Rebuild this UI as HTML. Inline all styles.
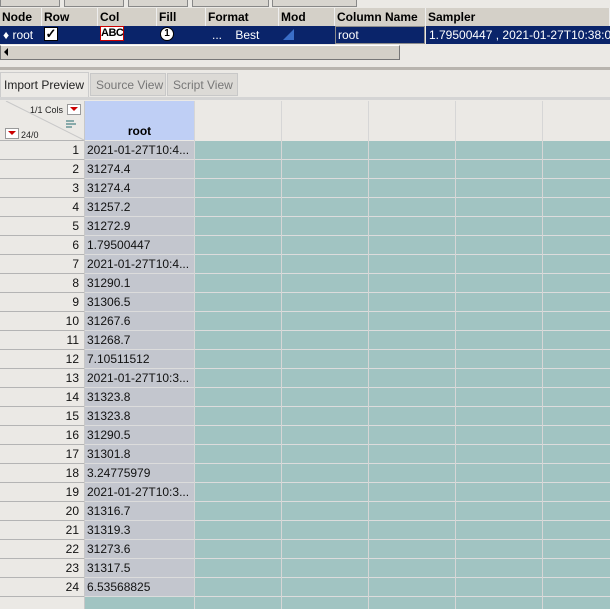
<!DOCTYPE html>
<html><head><style>
html,body{margin:0;width:610px;height:609px;overflow:hidden}
body{background:#ebe9e5;font-family:"Liberation Sans",sans-serif;font-size:12px;position:relative}
.a{position:absolute}
.btn{position:absolute;top:-2px;height:8px;background:#d8d5cf;border:1px solid #888;border-top:none}
.hd{top:8px;height:18px;background:#d4d0c8;line-height:18px;font-weight:bold;font-size:12px;padding-left:2px;box-sizing:border-box;border-right:1px solid #eee}
.sel{top:26px;height:18px;background:#0a246a;color:#fff;line-height:18px;font-size:12px}
.row{position:absolute;left:0;width:610px;height:19px}
.rn{position:absolute;left:0;width:84px;height:18px;background:#ebe9e5;border-bottom:1px solid #b4b4b4;text-align:right;box-sizing:content-box;padding-right:0;line-height:18px;color:#111}
.rn span{margin-right:5px}
.rc{position:absolute;left:85px;width:107px;height:18px;background:#c3c6ce;border-bottom:1px solid #dcdcdc;line-height:18px;padding-left:2px;color:#111;white-space:nowrap;overflow:hidden}
.tl{position:absolute;left:194px;right:0;height:18px;background:#a1c4c2;border-bottom:1px solid #dcdcdc}
.vl{position:absolute;width:1px;background:#d6d6d6}
</style></head><body>
<div class="btn" style="left:0;width:58px"></div>
<div class="btn" style="left:64px;width:58px"></div>
<div class="btn" style="left:128px;width:58px"></div>
<div class="btn" style="left:192px;width:75px"></div>
<div class="btn" style="left:272px;width:83px"></div>

<div class="a hd" style="left:0;width:42px">Node</div>
<div class="a hd" style="left:42px;width:56px">Row</div>
<div class="a hd" style="left:98px;width:59px">Col</div>
<div class="a hd" style="left:157px;width:49px">Fill</div>
<div class="a hd" style="left:206px;width:73px">Format</div>
<div class="a hd" style="left:279px;width:56px">Mod</div>
<div class="a hd" style="left:335px;width:91px">Column Name</div>
<div class="a hd" style="left:426px;width:184px">Sampler</div>

<div class="a sel" style="left:0;width:335px"></div>
<div class="a sel" style="left:3px;font-size:12px">&#9830; root</div>
<div class="a" style="left:44px;top:27px;width:14px;height:14px;background:#fff;border:1px solid #000;box-sizing:border-box;color:#000;font-size:13px;line-height:12px;text-align:center;font-weight:bold">&#10003;</div>
<div class="a" style="left:100px;top:26px;width:24px;height:15px;background:#fff;border:1px solid #c00;box-sizing:border-box;color:#000;font-size:11px;font-weight:bold;line-height:13px;text-align:center;letter-spacing:-0.5px">ABC</div>
<div class="a" style="left:160px;top:27px;width:14px;height:14px;border-radius:50%;background:#fff;border:1px solid #000;box-sizing:border-box;color:#000;font-size:10px;font-weight:bold;line-height:12px;text-align:center">1</div>
<div class="a sel" style="left:212px">...&nbsp;&nbsp;&nbsp; Best</div>
<svg class="a" style="left:283px;top:29px" width="12" height="12"><polygon points="11,0 11,11 0,11" fill="#3a6ec8"/></svg>
<div class="a sel" style="left:335px;width:90px;border:1px solid #8c8c8c;box-sizing:border-box;padding-left:2px;line-height:16px">root</div>
<div class="a sel" style="left:426px;width:184px;padding-left:3px;white-space:nowrap;overflow:hidden">1.79500447 , 2021-01-27T10:38:0</div>

<div class="a" style="left:0;top:45px;width:400px;height:15px;background:#d4d0c8;border:1px solid #777;border-top:1px solid #fff;box-sizing:border-box"></div>
<div class="a" style="left:4px;top:48px;width:0;height:0;border-top:4px solid transparent;border-bottom:4px solid transparent;border-right:4px solid #000"></div>
<div class="a" style="left:0;top:67px;width:610px;height:3px;background:#b8b4ae"></div>

<div class="a" style="left:0;top:72px;width:89px;height:25px;background:#ebe9e5;border:1px solid #ccc;border-bottom:none;box-sizing:border-box;line-height:24px;padding-left:3px;color:#222">Import Preview</div>
<div class="a" style="left:90px;top:73px;width:76px;height:23px;background:#dcdad6;border:1px solid #c8c8c8;box-sizing:border-box;line-height:22px;padding-left:5px;color:#777">Source View</div>
<div class="a" style="left:167px;top:73px;width:71px;height:23px;background:#dcdad6;border:1px solid #c8c8c8;box-sizing:border-box;line-height:22px;padding-left:5px;color:#777">Script View</div>
<div class="a" style="left:0;top:97px;width:610px;height:3px;background:#d4d4d4"></div>

<div class="a" style="left:0;top:101px;width:84px;height:39px;background:#ebe9e5;border-bottom:1px solid #b4b4b4"></div>
<svg class="a" style="left:0;top:101px" width="84" height="40"><line x1="6" y1="0" x2="84" y2="39" stroke="#c8c8c8"/><g fill="#8aa"><rect x="66" y="19" width="8" height="2"/><rect x="66" y="22" width="10" height="2"/><rect x="66" y="25" width="6" height="2"/></g></svg>
<div class="a" style="left:30px;top:105px;font-size:9px;color:#222">1/1 Cols</div>
<div class="a" style="left:67px;top:104px;width:12px;height:9px;border:1px solid #999;background:#fff"><div style="margin:2px auto 0;width:0;height:0;border-left:4px solid transparent;border-right:4px solid transparent;border-top:4px solid #c00"></div></div>
<div class="a" style="left:5px;top:128px;width:12px;height:9px;border:1px solid #999;background:#fff"><div style="margin:2px auto 0;width:0;height:0;border-left:4px solid transparent;border-right:4px solid transparent;border-top:4px solid #c00"></div></div>
<div class="a" style="left:21px;top:130px;font-size:9px;color:#222">24/0</div>
<div class="a" style="left:85px;top:101px;width:109px;height:39px;background:#bfcff5;text-align:center;font-weight:bold;line-height:60px">root</div>

<div id="g"></div>
<script>
var v=["2021-01-27T10:4...","31274.4","31274.4","31257.2","31272.9","1.79500447","2021-01-27T10:4...","31290.1","31306.5","31267.6","31268.7","7.10511512","2021-01-27T10:3...","31323.8","31323.8","31290.5","31301.8","3.24775979","2021-01-27T10:3...","31316.7","31319.3","31273.6","31317.5","6.53568825",""];
var h="";
for(var i=0;i<25;i++){var t=141+i*19;h+='<div class="row" style="top:'+t+'px"><div class="rn"><span>'+(i<24?i+1:"")+'</span></div><div class="rc"'+(i==24?' style="background:#a1c4c2"':'')+'>'+v[i]+'</div><div class="tl"></div></div>';}
[194,281,368,455,542].forEach(function(x){h+='<div class="vl" style="left:'+x+'px;top:101px;height:508px"></div>'});
h+='<div class="vl" style="left:84px;top:101px;height:508px;background:#c8c8c8"></div>';
document.getElementById("g").innerHTML=h;
</script>
</body></html>
